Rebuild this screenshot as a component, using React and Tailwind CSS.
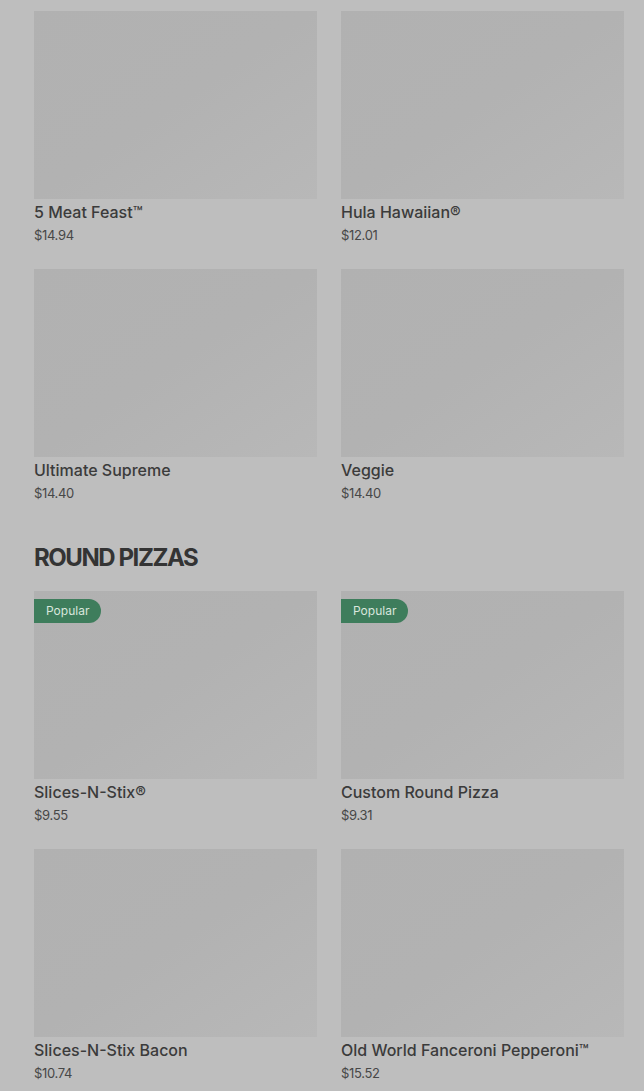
const groups = [
  {
    title: null,
    items: [
      { name: "5 Meat Feast™", price: "$14.94" },
      { name: "Hula Hawaiian®", price: "$12.01" },
      { name: "Ultimate Supreme", price: "$14.40" },
      { name: "Veggie", price: "$14.40" },
    ],
  },
  {
    title: "ROUND PIZZAS",
    items: [
      { name: "Slices-N-Stix®", price: "$9.55", popular: true },
      { name: "Custom Round Pizza", price: "$9.31", popular: true },
      { name: "Slices-N-Stix Bacon", price: "$10.74" },
      { name: "Old World Fanceroni Pepperoni™", price: "$15.52" },
    ],
  },
];

const PizzaCard = ({ item }) => (
  <div className="flex flex-col">
    <div className="relative h-[188px] bg-gradient-to-br from-[#b1b1b1] via-[#b2b2b2] to-[#b8b8b8]">
      {item.popular && (
        <span className="absolute left-0 top-2 h-6 pl-3 pr-3 flex items-center rounded-r-full bg-[#3e7d5c] text-[12px] text-[#d9e6dd]">
          Popular
        </span>
      )}
    </div>
    <div className="mt-[2px] text-[16px] leading-[22px] font-medium text-[#3b3b3b]">{item.name}</div>
    <div className="mt-[2px] text-[13px] leading-[20px] text-[#474747] tracking-tight">{item.price}</div>
  </div>
);

export default function App() {
  return (
    <div
      className="min-h-[1091px] bg-[#bebebe] pl-[34px] pr-[20px] pt-[11px]"
      style={{ fontFamily: "Inter, 'Liberation Sans', sans-serif" }}
    >
      {groups.map((group, gi) => (
        <section key={gi} className={gi > 0 ? "mt-[38px]" : ""}>
          {group.title && (
            <h2 className="mb-[16px] text-[24px] leading-[34px] font-bold tracking-[-0.06em] text-[#343434]">
              {group.title}
            </h2>
          )}
          <div className="grid grid-cols-2 gap-x-[24px] gap-y-[24px]">
            {group.items.map((item) => (
              <PizzaCard key={item.name} item={item} />
            ))}
          </div>
        </section>
      ))}
    </div>
  );
}
